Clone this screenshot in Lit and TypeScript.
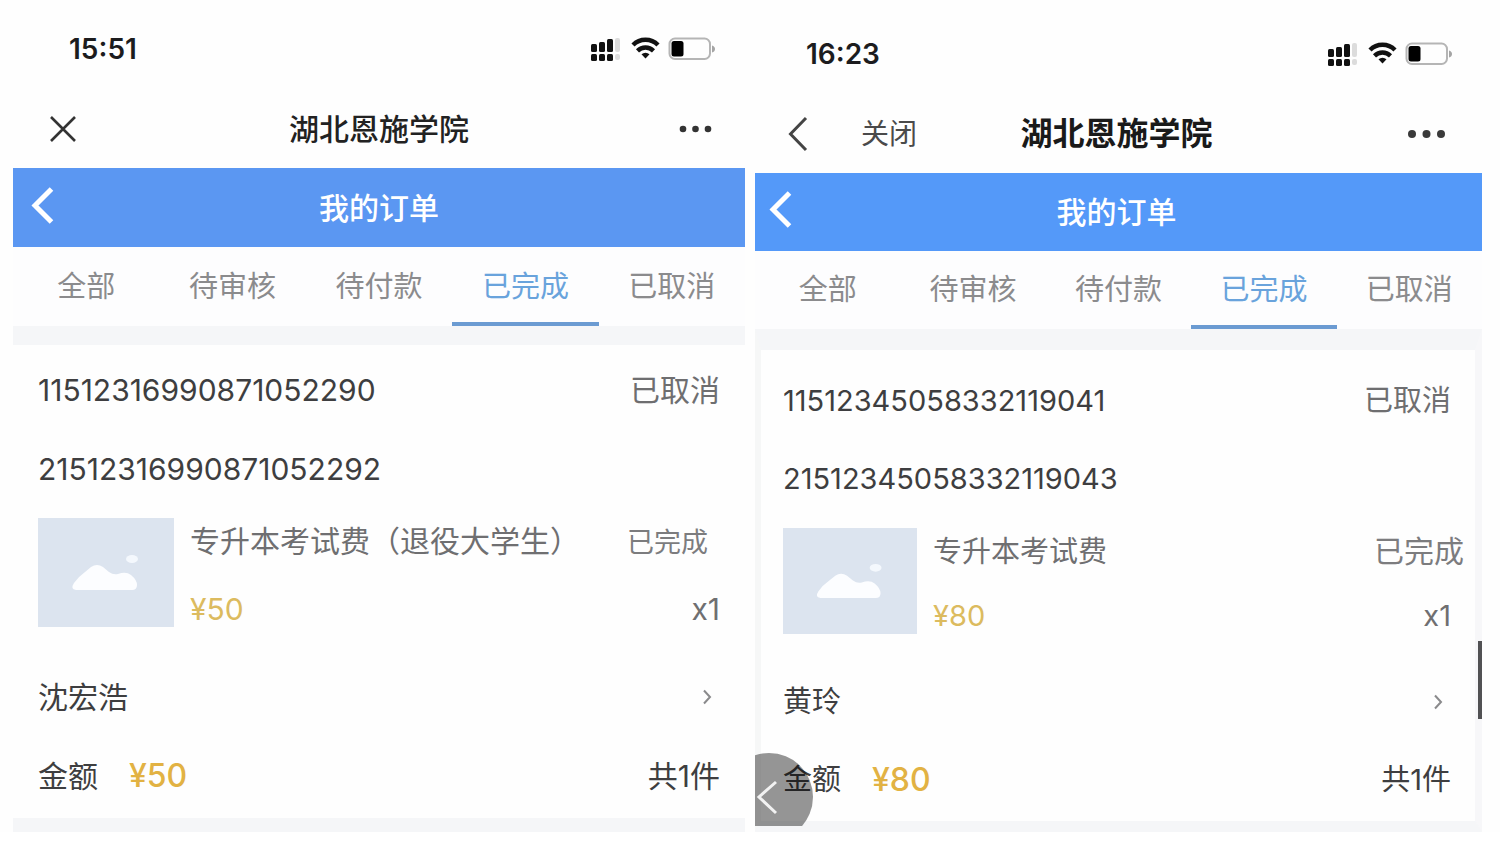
import { LitElement, html, svg, css, nothing } from "lit";
import { customElement, property } from "lit/decorators.js";
import { classMap } from "lit/directives/class-map.js";

interface Order {
  variant: "first" | "second";
  time: string;
  numbers: string[];
  item: string;
  price: string;
  buyer: string;
}

const ORDERS: Order[] = [
  {
    variant: "first",
    time: "15:51",
    numbers: ["11512316990871052290", "21512316990871052292"],
    item: "专升本考试费（退役大学生）",
    price: "¥50",
    buyer: "沈宏浩",
  },
  {
    variant: "second",
    time: "16:23",
    numbers: ["11512345058332119041", "21512345058332119043"],
    item: "专升本考试费",
    price: "¥80",
    buyer: "黄玲",
  },
];

const TABS = ["全部", "待审核", "待付款", "已完成", "已取消"];
const ACTIVE_TAB = "已完成";

const statusIcons = svg`
  <svg class="status-icons" viewBox="0 0 124 24" aria-hidden="true">
    <g fill="#111">
      <rect x="0" y="7" width="6" height="8" rx="1.500"/>
      <rect x="8" y="5" width="6" height="10" rx="1.500"/>
      <rect x="16" y="2" width="6" height="13" rx="1.500"/>
      <rect x="0" y="17" width="6" height="7" rx="1.500"/>
      <rect x="8" y="17" width="6" height="7" rx="1.500"/>
      <rect x="16" y="17" width="6" height="7" rx="1.500"/>
    </g>
    <g fill="#dcdcdc">
      <rect x="24" y="1" width="5" height="14" rx="2"/>
      <rect x="24" y="17" width="5" height="6" rx="2"/>
    </g>
    <g fill="none" stroke="#111" stroke-width="4.400">
      <path d="M42 8a17.500 17.500 0 0 1 25 0"/>
      <path d="M46.500 13.800a11.500 11.500 0 0 1 16 0"/>
    </g>
    <path d="M50.500 17.300a6 6 0 0 1 8 0L54.500 21.500z" fill="#111"/>
    <rect x="78.500" y="1.500" width="40.500" height="20.500" rx="5.500" fill="none" stroke="#b5b5b5" stroke-width="2"/>
    <rect x="80.500" y="4" width="12" height="15.500" rx="2.500" fill="#000"/>
    <path d="M121 8.500q3 1 3 3.500t-3 3.500z" fill="#a5a5a5"/>
  </svg>`;

const placeholder = svg`
  <svg class="thumb" viewBox="0 0 136 109" preserveAspectRatio="none" role="img" aria-label="商品图片">
    <rect width="136" height="109" fill="#dce4ef"/>
    <path d="M38 72Q32 71 36 65Q40 59 47 54L53 49Q59 45 65 49L71 54Q75 57 80 56Q88 53 93 57Q99 62 99 67Q99 72 94 72Z" fill="#fcfdff"/>
    <ellipse cx="94" cy="41" rx="6" ry="4" fill="#f4f8fd"/>
  </svg>`;

@customElement("phone-screen")
export class PhoneScreen extends LitElement {
  @property({ attribute: false }) order!: Order;

  static styles = css`
    :host { display: block; min-width: 0; }
    * { box-sizing: border-box; }
    button {
      appearance: none; border: 0; margin: 0; padding: 0;
      background: none; font: inherit; color: inherit; cursor: pointer;
    }
    svg { display: block; flex: none; }
    h1, h2, ul, p { margin: 0; padding: 0; font-size: inherit; font-weight: inherit; }
    .screen {
      --row: 79px; --edge: 25px; --top: 9px; --status: 89px; --blue: #5b97f2;
      position: relative; color: #3e3e40; font-size: 30px; line-height: 36px;
      background: #fefefe;
    }
    .screen.second { --row: 78px; --top: 13px; --status: 95px; --blue: #5499f9; font-size: 29px; }

    .status-bar {
      display: flex; align-items: center; justify-content: space-between;
      height: var(--status); padding: var(--top) 30px 0 56px;
      font-size: 28px; font-weight: 600; color: #1c1c1e;
    }
    .second .status-bar { padding-left: 51px; }
    .status-icons { width: 124px; height: 24px; }

    .nav {
      display: grid; grid-template-columns: 1fr auto 1fr; align-items: center;
      height: var(--row); padding: 0 32px;
    }
    .second .nav { padding: 0 36px 0 32px; }
    .nav-title { font-size: 30px; font-weight: 500; color: #222; }
    .second .nav-title { font-size: 32px; font-weight: 700; color: #1a1a1a; }
    .nav-left { display: flex; align-items: center; gap: 52px; padding-left: 4px; color: #4a4a4a; font-size: 28px; }
    .second .nav-left { padding-left: 0; }
    .more { justify-self: end; }

    .bar {
      display: grid; grid-template-columns: 1fr auto 1fr; align-items: center;
      height: var(--row); padding: 0 16px; color: #fff; background: var(--blue);
    }
    .second .bar { padding-left: 12px; }
    .bar-title { font-size: 30px; font-weight: 500; }
    .back { justify-self: start; }

    .tabs {
      display: grid; grid-template-columns: repeat(5, 1fr);
      height: var(--row); background: #fdfdfe; color: #8b8b8d; font-size: 29px;
    }
    .tab { border: 0 solid transparent; border-width: 4px 0; }
    .tab.active { color: #69a3dc; border-bottom-color: #6b9bd2; }

    .card { padding: 5px var(--edge) 3px; border-top: 19px solid #f5f6f8; border-bottom: 14px solid #f5f6f8; }
    .second .card {
      padding: 12px 24px 2px 22px;
      border: 6px solid #f5f6f8; border-width: 21px 7px 11px 6px;
      border-left-color: #f6f7f7; border-right-color: #f7f7f9;
    }
    .row { display: flex; align-items: center; justify-content: space-between; height: var(--row); }
    .state { color: #6e6e70; }
    .item { display: flex; gap: 16px; margin: 10px 0 30px; }
    .second .item { margin-bottom: 29px; }
    .thumb { width: 136px; height: 109px; }
    .second .thumb { width: 134px; height: 106px; }
    .item-body { flex: 1; display: flex; flex-direction: column; justify-content: space-between; color: #6f6f71; }
    .line { display: flex; justify-content: space-between; align-items: center; }
    .name { line-height: 46px; align-items: baseline; }
    .item-state { margin-right: 12px; font-size: 27px; color: #7c7c7e; }
    .second .item-state { margin-right: -13px; font-size: 30px; }
    .price { color: #dcbb5f; }
    .link { width: 100%; text-align: left; }
    .total { display: flex; align-items: center; gap: 31px; }
    .sum { font-size: 32px; font-weight: 500; color: #e2b243; }
    .chevron { margin-right: 8px; }

    .float { position: absolute; left: 0; bottom: 6px; }
    .scroll { position: absolute; right: 0; bottom: 113px; width: 4px; height: 78px; background: #525254; }
  `;

  render() {
    const { variant, time, numbers, item, price, buyer } = this.order;
    const second = variant === "second";
    return html`
      <section class=${classMap({ screen: true, second })}>
        <div class="status-bar"><span>${time}</span>${statusIcons}</div>
        <header class="nav">
          <div class="nav-left">
            ${second
              ? html`<button aria-label="后退">
                    <svg width="22" height="36" viewBox="0 0 22 36"><path d="M19 2L3.500 18L19 34" fill="none" stroke="#444" stroke-width="3"/></svg>
                  </button>
                  <button>关闭</button>`
              : html`<button aria-label="关闭">
                  <svg width="28" height="28" viewBox="0 0 28 28"><path d="M2 2L26 26M26 2L2 26" fill="none" stroke="#333" stroke-width="2.600"/></svg>
                </button>`}
          </div>
          <h1 class="nav-title">湖北恩施学院</h1>
          <button class="more" aria-label="更多">
            ${second
              ? html`<svg width="38" height="10" viewBox="0 0 38 10" fill="#3a3a3a"><circle cx="4" cy="5" r="4"/><circle cx="18.500" cy="5" r="4"/><circle cx="33" cy="5" r="4"/></svg>`
              : html`<svg width="34" height="8" viewBox="0 0 34 8" fill="#333"><circle cx="4" cy="4" r="3.300"/><circle cx="16.500" cy="4" r="3.300"/><circle cx="29" cy="4" r="3.300"/></svg>`}
          </button>
        </header>
        <div class="bar">
          <button class="back" aria-label="返回">
            <svg width="26" height="42" viewBox="0 0 26 42"><path d="M22.500 2L6 18.500L22.500 35" fill="none" stroke="#fff" stroke-width="5"/></svg>
          </button>
          <h2 class="bar-title">我的订单</h2>
        </div>
        <nav class="tabs">
          ${TABS.map((t) => html`<button class=${classMap({ tab: true, active: t === ACTIVE_TAB })}>${t}</button>`)}
        </nav>
        <article class="card">
          <div class="row"><span>${numbers[0]}</span><span class="state">已取消</span></div>
          <div class="row"><span>${numbers[1]}</span></div>
          <div class="item">
            ${placeholder}
            <div class="item-body">
              <div class="line name"><span>${item}</span><span class="item-state">已完成</span></div>
              <div class="line"><span class="price">${price}</span><span>x1</span></div>
            </div>
          </div>
          <button class="row link">
            <span>${buyer}</span>
            <svg class="chevron" width="10" height="16" viewBox="0 0 10 16"><path d="M2 1.500L8 8L2 14.500" fill="none" stroke="#8a8a8c" stroke-width="2"/></svg>
          </button>
          <div class="row">
            <p class="total"><span>金额</span><span class="sum">${price}</span></p>
            <span>共1件</span>
          </div>
        </article>
        ${second
          ? html`<button class="float" aria-label="返回上一页">
                <svg width="58" height="73" viewBox="0 0 58 73">
                  <circle cx="14" cy="44" r="44" fill="#000" fill-opacity="0.41"/>
                  <path d="M21 29L4 44L21 60" fill="none" stroke="#f2f2f2" stroke-width="3"/>
                </svg>
              </button>
              <div class="scroll"></div>`
          : nothing}
      </section>
    `;
  }
}

@customElement("app-root")
export class AppRoot extends LitElement {
  static styles = css`
    :host {
      display: block;
      background: #fefefe;
      font-family: Inter, "Noto Sans CJK SC", sans-serif;
    }
    .pair {
      display: grid;
      grid-template-columns: 732fr 727fr;
      align-items: start;
      gap: 10px;
      padding: 0 18px 0 13px;
    }
  `;

  render() {
    return html`
      <main class="pair">
        ${ORDERS.map((o) => html`<phone-screen .order=${o}></phone-screen>`)}
      </main>
    `;
  }
}
